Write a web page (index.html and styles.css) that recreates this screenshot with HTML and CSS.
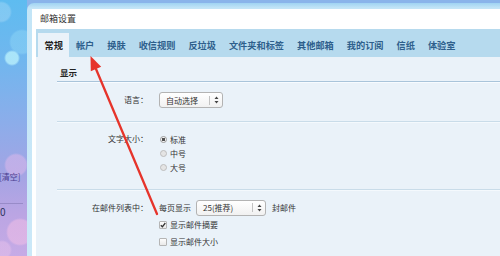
FILE: index.html
```html
<!DOCTYPE html>
<html lang="zh-CN">
<head>
<meta charset="utf-8">
<title>邮箱设置</title>
<link rel="stylesheet" href="styles.css">
</head>
<body>
<div class="screen">
  <aside class="side">
    <span class="side-link">[清空]</span>
    <span class="side-rule"></span>
    <span class="side-num">0</span>
  </aside>
  <div class="window">
    <div class="panel">
      <div class="title">邮箱设置</div>
      <nav class="tabs">
        <span class="tab active">常规</span>
        <span class="tab">帐户</span>
        <span class="tab">换肤</span>
        <span class="tab">收信规则</span>
        <span class="tab">反垃圾</span>
        <span class="tab">文件夹和标签</span>
        <span class="tab">其他邮箱</span>
        <span class="tab">我的订阅</span>
        <span class="tab">信纸</span>
        <span class="tab">体验室</span>
      </nav>
      <div class="content">
        <section class="sec">
          <h2 class="sec-title">显示</h2>
          <div class="row row-lang">
            <div class="label">语言：</div>
            <div class="ctrl">
              <span class="select sel-lang">
                <span class="sel-text">自动选择</span>
                <span class="sel-arrow"><svg width="5" height="8" viewBox="0 0 5 8"><path d="M2.5 0.5 L4.5 3 L0.5 3 Z M0.5 5 L4.5 5 L2.5 7.5 Z" fill="#444"/></svg></span>
              </span>
            </div>
          </div>
          <div class="row row-size">
            <div class="label">文字大小：</div>
            <div class="ctrl opts">
              <label class="opt"><span class="radio on"></span>标准</label>
              <label class="opt"><span class="radio"></span>中号</label>
              <label class="opt"><span class="radio"></span>大号</label>
            </div>
          </div>
          <div class="row row-list">
            <div class="label">在邮件列表中：</div>
            <div class="ctrl opts">
              <div class="perpage">
                <span>每页显示</span>
                <span class="select sel-num">
                  <span class="sel-text">25(推荐)</span>
                  <span class="sel-arrow"><svg width="5" height="8" viewBox="0 0 5 8"><path d="M2.5 0.5 L4.5 3 L0.5 3 Z M0.5 5 L4.5 5 L2.5 7.5 Z" fill="#444"/></svg></span>
                </span>
                <span class="unit">封邮件</span>
              </div>
              <label class="chk-row"><span class="chk on"><svg width="6" height="6" viewBox="0 0 6 6"><path d="M0.8 3.2 L2.4 4.8 L5.3 1.0" fill="none" stroke="#333" stroke-width="1.3"/></svg></span>显示邮件摘要</label>
              <label class="chk-row"><span class="chk"></span>显示邮件大小</label>
            </div>
          </div>
        </section>
      </div>
    </div>
  </div>
  <svg class="arrow" width="500" height="256" viewBox="0 0 500 256">
    <line x1="157" y1="214" x2="96" y2="69" stroke="#e6342b" stroke-width="2.3" stroke-linecap="round"/>
    <polygon points="90.5,56 101.2,66.8 90.8,71.2" fill="#e6342b"/>
  </svg>
</div>
</body>
</html>
```
FILE: styles.css
```css
* {
  box-sizing: border-box;
  margin: 0;
  padding: 0;
}

html,
body {
  width: 500px;
  height: 256px;
  overflow: hidden;
}

body {
  font-family: "Noto Sans CJK SC", "Noto Sans", "Liberation Sans", sans-serif;
  color: #333;
  background: #8ab4ea;
}

.screen {
  position: relative;
  display: flex;
  width: 500px;
  height: 256px;
}

/* left desktop strip */
.side {
  width: 27px;
  flex: none;
  display: flex;
  flex-direction: column;
  padding-top: 172px;
  overflow: hidden;
  background:
    radial-gradient(circle at 12px 58px, rgba(185, 240, 252, 0.8) 0 6px, rgba(185, 240, 252, 0) 8px),
    radial-gradient(circle at 22px 42px, rgba(150, 220, 248, 0.4) 0 11px, rgba(150, 220, 248, 0) 13px),
    radial-gradient(circle at 1px 12px, rgba(255, 255, 255, 0.2) 0 9px, rgba(255, 255, 255, 0) 11px),
    radial-gradient(circle at 16px 165px, rgba(225, 185, 235, 0.5) 0 10px, rgba(225, 185, 235, 0) 12px),
    radial-gradient(circle at 20px 232px, rgba(240, 190, 230, 0.55) 0 12px, rgba(240, 190, 230, 0) 14px),
    radial-gradient(circle at 2px 250px, rgba(235, 195, 235, 0.45) 0 8px, rgba(235, 195, 235, 0) 10px),
    linear-gradient(180deg, #5ebcf0 0%, #72b6ee 25%, #8cadea 48%, #a3a4e4 68%, #bba5e3 84%, #c6abe6 100%);
}

.side-link {
  font-size: 8px;
  line-height: 10px;
  color: #4a3b8f;
  white-space: nowrap;
  margin-left: -1px;
}

.side-rule {
  height: 1px;
  margin-top: 21px;
  margin-right: 4px;
  background: rgba(110, 100, 160, 0.4);
}

.side-num {
  margin-top: 2px;
  font-size: 10px;
  line-height: 12px;
  color: #2d3560;
}

/* window */
.window {
  flex: 1;
  display: flex;
  margin-top: 3px;
  padding: 6px 0 0 5px;
  border-top-left-radius: 7px;
  background: linear-gradient(180deg, #9fd3f2 0, #c3e5f7 5px, #cbe8f8 100%);
}

.panel {
  flex: 1;
  display: flex;
  flex-direction: column;
  padding-left: 4px;
  background: #fff;
}

.title {
  height: 20px;
  line-height: 20px;
  padding-left: 4px;
  font-size: 9px;
  color: #333;
}

.tabs {
  display: flex;
  align-items: flex-end;
  height: 28px;
  padding-left: 2px;
  background: #b6daee;
}

.tab {
  height: 24px;
  line-height: 24px;
  padding: 0 6.5px;
  font-size: 9.2px;
  font-weight: 700;
  color: #2e5f8c;
  white-space: nowrap;
}

.tab.active {
  background: #eaf2f9;
  color: #1e1e1e;
}

.content {
  flex: 1;
  padding-left: 21px;
  background: #eaf2f9;
}

.sec-title {
  padding: 9px 0 3px 3px;
  line-height: 12px;
  font-size: 8.5px;
  font-weight: 700;
  color: #222;
  border-bottom: 1px solid #a9c4da;
  box-shadow: 0 1px 0 #f7fbff;
}

.row {
  display: flex;
  align-items: flex-start;
  border-bottom: 1px solid #c9dce9;
  box-shadow: 0 1px 0 #f4f9fd;
}

.row-lang {
  padding: 10px 0 13px;
}

.row-size {
  padding: 10px 0 15px;
}

.row-list {
  padding: 9px 0 0;
  border-bottom: none;
  box-shadow: none;
}

.label {
  width: 91px;
  flex: none;
  text-align: right;
  font-size: 8px;
  color: #333;
}

.row-lang .label {
  line-height: 16px;
}

.row-size .label {
  line-height: 14px;
}

.row-list .label {
  line-height: 17px;
}

.ctrl {
  margin-left: 11px;
  font-size: 8px;
  color: #333;
}

.opts {
  display: flex;
  flex-direction: column;
}

/* select */
.select {
  display: inline-flex;
  align-items: center;
  height: 16px;
  border: 1px solid #b3b3b3;
  border-radius: 3px;
  background: linear-gradient(180deg, #ffffff, #f1f1f1);
  font-size: 8px;
  color: #333;
}

.sel-lang {
  width: 64px;
}

.sel-num {
  width: 70px;
  margin-left: 5px;
}

.sel-text {
  flex: 1;
  padding-left: 6px;
  white-space: nowrap;
}

.sel-arrow {
  width: 13px;
  height: 9px;
  flex: none;
  display: flex;
  align-items: center;
  justify-content: center;
  border-left: 1px solid #c2c2c2;
}

/* radios */
.opt {
  display: flex;
  align-items: center;
  height: 14px;
}

.radio {
  width: 7px;
  height: 7px;
  margin: 0 3.5px 0 0.5px;
  border-radius: 50%;
  border: 1px solid #bdbdbd;
  background: #e4e4e4;
}

.radio.on {
  border-color: #9a9a9a;
  background: radial-gradient(circle, #4f4f4f 0 1.4px, #f4f4f4 1.9px);
}

/* per page + checkboxes */
.perpage {
  display: flex;
  align-items: center;
  height: 17px;
}

.unit {
  margin-left: 6px;
}

.chk-row {
  display: flex;
  align-items: center;
  height: 17px;
}

.chk {
  width: 8px;
  height: 8px;
  margin-right: 3px;
  display: flex;
  align-items: center;
  justify-content: center;
  border: 1px solid #b5b5b5;
  border-radius: 1px;
  background: linear-gradient(180deg, #fdfdfd, #e9e9e9);
}

/* annotation arrow over the screenshot */
.arrow {
  position: absolute;
  left: 0;
  top: 0;
  pointer-events: none;
}
```
